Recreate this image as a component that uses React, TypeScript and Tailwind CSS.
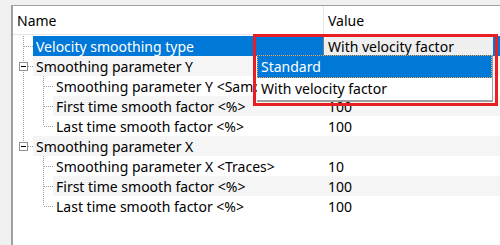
import React from 'react';

interface Row {
  label: string;
  value: string;
  level: 0 | 1;
  expander?: boolean;
  // tree line flags for the outer gutter and the inner gutter
  outer: 'full' | 'top' | 'none';
  inner?: 'full' | 'top';
}

const rows: Row[] = [
  { label: 'Velocity smoothing type', value: '', level: 0, outer: 'full' },
  { label: 'Smoothing parameter Y', value: '', level: 0, expander: true, outer: 'full' },
  { label: 'Smoothing parameter Y <Samples>', value: '', level: 1, outer: 'full', inner: 'full' },
  { label: 'First time smooth factor <%>', value: '100', level: 1, outer: 'full', inner: 'full' },
  { label: 'Last time smooth factor <%>', value: '100', level: 1, outer: 'full', inner: 'top' },
  { label: 'Smoothing parameter X', value: '', level: 0, expander: true, outer: 'top' },
  { label: 'Smoothing parameter X <Traces>', value: '10', level: 1, outer: 'none', inner: 'full' },
  { label: 'First time smooth factor <%>', value: '100', level: 1, outer: 'none', inner: 'full' },
  { label: 'Last time smooth factor <%>', value: '100', level: 1, outer: 'none', inner: 'top' },
];

const DOT = '#a0a0a0';

// one 20x20 gutter cell with dotted tree lines
const Gutter: React.FC<{ vert: 'full' | 'top' | 'none'; branch: boolean; expander?: boolean }> = ({ vert, branch, expander }) => (
  <svg width="20" height="20" viewBox="0 0 20 20" className="shrink-0 block">
    {vert === 'full' && <line x1="10.5" y1="0" x2="10.5" y2="20" stroke={DOT} strokeDasharray="1 1" />}
    {vert === 'top' && <line x1="10.5" y1="0" x2="10.5" y2="10" stroke={DOT} strokeDasharray="1 1" />}
    {branch && <line x1="11" y1="10.5" x2="20" y2="10.5" stroke={DOT} strokeDasharray="1 1" />}
    {expander && (
      <g>
        <rect x="6.5" y="6.5" width="8" height="8" fill="white" stroke="#919191" />
        <line x1="8" y1="10.5" x2="13" y2="10.5" stroke="#000" />
      </g>
    )}
  </svg>
);

const App: React.FC = () => {
  return (
    <div className="relative w-[500px] h-[245px] overflow-hidden bg-[#f0f0f0] pt-[5px] pl-[11px] font-['Noto_Sans',sans-serif] text-[14px] text-black">
      <div className="h-[240px] bg-white border-t border-l-2 border-[#a0a0a0]">
        {/* header */}
        <div className="flex h-[29px] border-b border-[#e5e5e5]">
          <div className="w-[310px] pl-[4px] leading-[30px]">Name</div>
          <div className="h-full border-l border-[#e5e5e5] pl-[4px] flex-1 leading-[30px]">Value</div>
        </div>

        {/* rows */}
        <div className="pt-[1px]">
          {rows.map((r, i) => {
            const selected = i === 0;
            const shaded = i % 2 === 1;
            const bg = selected ? 'bg-[#0078d7] text-white' : shaded ? 'bg-[#f5f5f5]' : '';
            return (
              <div key={i} className="flex h-[20px]">
                <Gutter vert={r.outer} branch={r.level === 0} expander={r.expander} />
                {r.level === 1 && <Gutter vert={r.inner!} branch />}
                <div className={`flex flex-1 h-[20px] ${bg}`}>
                  <div className={`${r.level === 0 ? 'w-[290px]' : 'w-[270px]'} pl-[3px] whitespace-nowrap overflow-hidden leading-[21px]`}>
                    {r.label}
                  </div>
                  <div className="flex-1 pl-[5px] whitespace-nowrap leading-[21px]">
                    {selected ? (
                      <div className="h-[20px] mr-[7px] -ml-[5px] bg-[#efefef] border-l border-[#7a7a7a] text-black pl-[4px] leading-[21px]">
                        With velocity factor
                      </div>
                    ) : (
                      r.value
                    )}
                  </div>
                </div>
              </div>
            );
          })}
        </div>
      </div>

      {/* opened dropdown list */}
      <div className="absolute left-[257px] top-[55px] w-[236px] bg-white border-r border-b-2 border-[#a0a0a0]">
        <div className="h-[23px] bg-[#0078d7] text-white pl-[3px] border border-dotted border-[#f7a44a] leading-[21px]">
          Standard
        </div>
        <div className="h-[22px] pl-[4px] leading-[22px]">With velocity factor</div>
      </div>

      {/* annotation box */}
      <div className="absolute left-[253px] top-[34px] w-[245px] h-[72px] border-[3px] border-[#e81e25]" />
    </div>
  );
};

export default App;
